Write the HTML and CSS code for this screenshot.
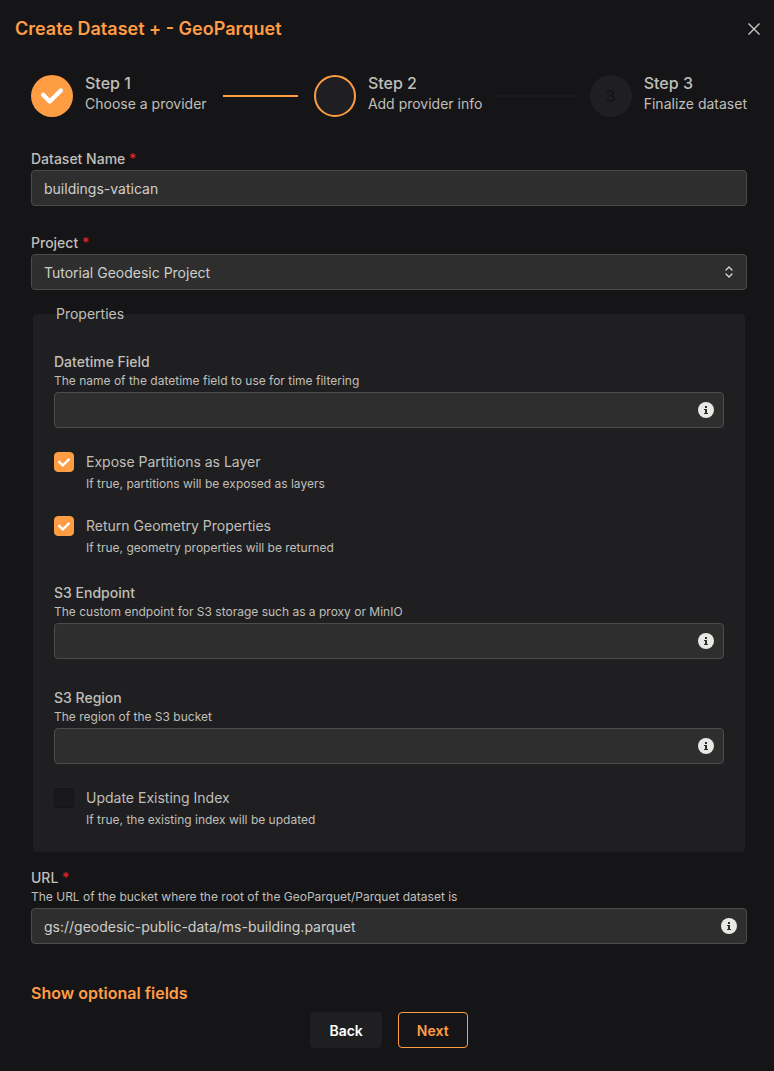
FILE: index.html
```html
<!DOCTYPE html>
<html lang="en">
<head>
  <meta charset="UTF-8" />
  <meta name="viewport" content="width=device-width, initial-scale=1.0" />
  <title>Create Dataset</title>
  <link rel="stylesheet" href="styles.css">
</head>
<body>

<!-- shared icons -->
<svg class="sprite" aria-hidden="true">
  <symbol id="icon-info" viewBox="0 0 16 16">
    <circle cx="8" cy="8" r="8" fill="#e9e8e4" />
    <path d="M7 4h2v2H7zM6 7h3v4h1v1H6v-1h1V8H6z" fill="#2e2e2e" />
  </symbol>
  <symbol id="icon-check" viewBox="0 0 10 7">
    <path d="M4 4.586L1.707 2.293A1 1 0 1 0 .293 3.707l3 3a.997.997 0 0 0 1.414 0l5-5A1 1 0 1 0 8.293.293L4 4.586z" fill="#fff" />
  </symbol>
</svg>

<header class="header">
  <h1>Create Dataset + - GeoParquet</h1>
  <button type="button" class="close" aria-label="Close">
    <svg width="14" height="14" viewBox="0 0 14 14"><path d="M1.5 1.5l11 11M12.5 1.5l-11 11" stroke="#c9c8c2" stroke-width="1.4" fill="none" /></svg>
  </button>
</header>

<form class="content">
  <div class="stepper">
    <div class="step">
      <span class="step-icon done"><svg width="22" height="16"><use href="#icon-check" /></svg></span>
      <div>
        <div class="step-label">Step 1</div>
        <div class="step-text">Choose a provider</div>
      </div>
    </div>
    <div class="separator active"></div>
    <div class="step">
      <span class="step-icon current"></span>
      <div>
        <div class="step-label">Step 2</div>
        <div class="step-text">Add provider info</div>
      </div>
    </div>
    <div class="separator"></div>
    <div class="step">
      <span class="step-icon">3</span>
      <div>
        <div class="step-label">Step 3</div>
        <div class="step-text">Finalize dataset</div>
      </div>
    </div>
  </div>

  <div class="field">
    <label for="name">Dataset Name <span class="required">*</span></label>
    <input type="text" id="name" value="buildings-vatican">
  </div>

  <div class="field">
    <label for="project">Project <span class="required">*</span></label>
    <div class="control">
      <select id="project">
        <option>Tutorial Geodesic Project</option>
      </select>
      <svg class="chevrons" width="8" height="12" viewBox="0 0 8 12"><path d="M1 4l3-3 3 3M1 8l3 3 3-3" stroke="#e0dfda" stroke-width="1.2" stroke-linecap="round" stroke-linejoin="round" fill="none" /></svg>
    </div>
  </div>

  <fieldset>
    <legend>Properties</legend>

    <div class="field">
      <label for="datetime">Datetime Field</label>
      <p class="description">The name of the datetime field to use for time filtering</p>
      <div class="control">
        <input type="text" id="datetime">
        <svg class="info" width="16" height="16"><use href="#icon-info" /></svg>
      </div>
    </div>

    <div class="check">
      <span class="box">
        <input type="checkbox" id="partitions" checked>
        <svg class="tick" width="12" height="9"><use href="#icon-check" /></svg>
      </span>
      <div>
        <label for="partitions">Expose Partitions as Layer</label>
        <p class="description">If true, partitions will be exposed as layers</p>
      </div>
    </div>

    <div class="check">
      <span class="box">
        <input type="checkbox" id="geometry" checked>
        <svg class="tick" width="12" height="9"><use href="#icon-check" /></svg>
      </span>
      <div>
        <label for="geometry">Return Geometry Properties</label>
        <p class="description">If true, geometry properties will be returned</p>
      </div>
    </div>

    <div class="field">
      <label for="endpoint">S3 Endpoint</label>
      <p class="description">The custom endpoint for S3 storage such as a proxy or MinIO</p>
      <div class="control">
        <input type="text" id="endpoint">
        <svg class="info" width="16" height="16"><use href="#icon-info" /></svg>
      </div>
    </div>

    <div class="field">
      <label for="region">S3 Region</label>
      <p class="description">The region of the S3 bucket</p>
      <div class="control">
        <input type="text" id="region">
        <svg class="info" width="16" height="16"><use href="#icon-info" /></svg>
      </div>
    </div>

    <div class="check">
      <span class="box">
        <input type="checkbox" id="update">
        <svg class="tick" width="12" height="9"><use href="#icon-check" /></svg>
      </span>
      <div>
        <label for="update">Update Existing Index</label>
        <p class="description">If true, the existing index will be updated</p>
      </div>
    </div>
  </fieldset>

  <div class="field">
    <label for="url">URL <span class="required">*</span></label>
    <p class="description">The URL of the bucket where the root of the GeoParquet/Parquet dataset is</p>
    <div class="control">
      <input type="text" id="url" value="gs://geodesic-public-data/ms-building.parquet">
      <svg class="info" width="16" height="16"><use href="#icon-info" /></svg>
    </div>
  </div>

  <button type="button" class="optional">Show optional fields</button>

  <div class="actions">
    <button type="button" class="btn back">Back</button>
    <button type="button" class="btn next">Next</button>
  </div>
</form>

</body>
</html>
```

FILE: styles.css
```css
* { box-sizing: border-box; }
body { margin: 0; background: #151517; color: #c0bfb9; font-family: Inter, sans-serif; font-size: 14px; line-height: 22px; }
button, input, select { font-family: inherit; font-size: 14px; }
h1, p { margin: 0; }
.sprite { display: none; }

.header { display: flex; align-items: center; justify-content: space-between; padding: 16px 13px 0 15px; }
h1 { color: #ff9d45; font-size: 18px; line-height: 26px; font-weight: 600; }
.close { display: flex; padding: 0; border: 0; background: none; cursor: pointer; }

.content { padding: 33px 27px 23px 31px; }

.stepper { display: flex; align-items: center; margin-bottom: 31px; }
.step { display: flex; align-items: center; gap: 12px; white-space: nowrap; }
.step-icon { display: flex; align-items: center; justify-content: center; width: 42px; height: 42px; border-radius: 50%; background: #1f1f21; color: #151517; font-size: 16px; font-weight: 700; }
.step-icon.done { background: #ff9d45; }
.step-icon.current { border: 2px solid #ff9d45; }
.step-label { font-size: 16px; font-weight: 500; line-height: 16px; }
.step-text { line-height: 26px; }
.separator { flex: 1; height: 2px; margin: 0 16px; background: #1b1b1d; }
.separator.active { background: #ff9d45; }

.field { margin-bottom: 26px; }
.field label { display: block; font-weight: 500; }
.required { color: #e02424; }
.description { font-size: 12px; line-height: 15px; }
.field .description { margin-bottom: 4px; }

.control { position: relative; }
.field input, select { display: block; width: 100%; height: 36px; padding: 0 12px; color: #d0cfc9; background: #2e2e2e; border: 1px solid #4d4c4a; border-radius: 4px; }
select { appearance: none; }
.info, .chevrons { position: absolute; top: 10px; right: 10px; pointer-events: none; }
.chevrons { top: 12px; right: 14px; }

fieldset { margin: -13px 2px 15px; padding: 26px 20px 23px; border: 1px solid #1f1f21; border-radius: 4px; background: #1f1f21; }
legend { padding: 0 2px; }
fieldset .field { margin-bottom: 24px; }

.check { display: flex; gap: 12px; margin-bottom: 24px; }
.check label { display: block; line-height: 20px; }
.check .description { margin-top: 4px; line-height: 16px; }
.check + .field { margin-top: 26px; }
fieldset .field + .field { margin-top: 28px; }
.check:last-child { margin-bottom: 0; }
.box { position: relative; width: 20px; height: 20px; }
.box input { display: block; appearance: none; width: 20px; height: 20px; margin: 0; border: 1px solid #151517; border-radius: 4px; background: #19191b; }
.box input:checked { background: #ff9d45; border-color: #ff9d45; }
.tick { position: absolute; top: 6px; left: 4px; visibility: hidden; pointer-events: none; }
.box input:checked + .tick { visibility: visible; }

.optional { display: block; margin-top: 38px; padding: 0; border: 0; background: none; color: #ff9d45; font-size: 16px; font-weight: 600; line-height: 22px; cursor: pointer; }
.actions { display: flex; justify-content: center; gap: 16px; margin-top: 8px; }
.btn { height: 36px; padding: 0 18px; border: 1px solid #1f1f21; border-radius: 4px; background: #1f1f21; color: #fff; font-weight: 600; cursor: pointer; }
.btn.next { border-color: #ff9d45; background: none; color: #ff9d45; }
```
